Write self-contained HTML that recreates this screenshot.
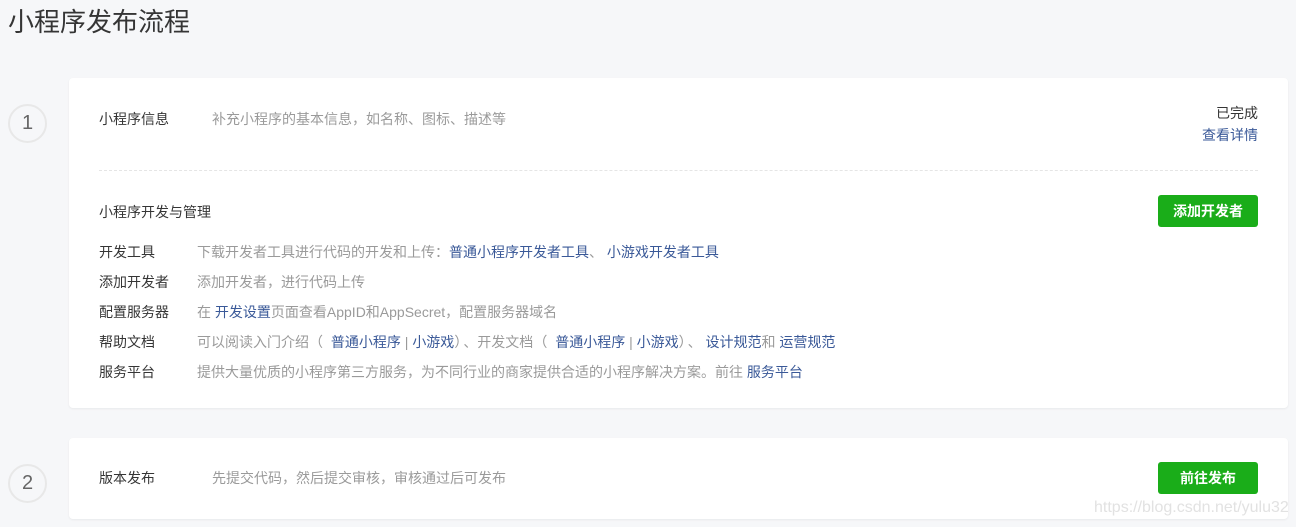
<!DOCTYPE html>
<html><head><meta charset="utf-8"><style>
*{margin:0;padding:0;box-sizing:border-box}
body{width:1296px;height:527px;background:#f6f7f9;font-family:"Liberation Sans","Noto Sans CJK SC",sans-serif;position:relative;overflow:hidden;font-size:14px;color:#353535}
.a{position:absolute;white-space:nowrap;line-height:18px}
.title{left:8px;top:6px;font-size:26px;line-height:32px;color:#353535}
.card{position:absolute;left:69px;width:1219px;background:#fff;border-radius:4px;box-shadow:0 1px 2px rgba(0,0,0,.06)}
.circ{position:absolute;left:8px;width:39px;height:39px;border:2px solid #e8e8e8;border-radius:50%;text-align:center;line-height:35px;font-size:20px;color:#666;background:#f6f7f9;font-weight:300}
.g{color:#9a9a9a}
.l{color:#3a5998}
.p{letter-spacing:2px}
.btn{position:absolute;background:#1aad19;color:#fff;border-radius:3px;text-align:center;font-size:14px;font-weight:bold}
</style></head><body>
<div class="a title">小程序发布流程</div>
<div class="circ" style="top:104px">1</div>
<div class="circ" style="top:464px">2</div>
<div class="card" style="top:78px;height:330px"></div>
<div class="card" style="top:438px;height:81px"></div>
<div class="a" style="left:99px;top:110px">小程序信息</div>
<div class="a g" style="left:212px;top:110px">补充小程序的基本信息，如名称、图标、描述等</div>
<div class="a" style="left:1216px;top:104px">已完成</div>
<div class="a l" style="left:1202px;top:126px">查看详情</div>
<div style="position:absolute;left:99px;top:170px;width:1159px;border-top:1px dashed #e5e5e5"></div>
<div class="a" style="left:99px;top:203px">小程序开发与管理</div>
<div class="btn" style="left:1158px;top:195px;width:100px;height:32px;line-height:32px">添加开发者</div>
<div class="a" style="left:99px;top:243px">开发工具</div>
<div class="a g" style="left:197px;top:243px">下载开发者工具进行代码的开发和上传：<span class="l">普通小程序开发者工具</span>、 <span class="l">小游戏开发者工具</span></div>
<div class="a" style="left:99px;top:273px">添加开发者</div>
<div class="a g" style="left:197px;top:273px">添加开发者，进行代码上传</div>
<div class="a" style="left:99px;top:303px">配置服务器</div>
<div class="a g" style="left:197px;top:303px">在 <span class="l">开发设置</span>页面查看AppID和AppSecret，配置服务器域名</div>
<div class="a" style="left:99px;top:333px">帮助文档</div>
<div class="a g" style="left:197px;top:333px">可以阅读入门介绍<span class="p">（ </span><span class="l">普通小程序</span> | <span class="l">小游戏</span><span class="p">）</span>、开发文档<span class="p">（ </span><span class="l">普通小程序</span> | <span class="l">小游戏</span><span class="p">）</span>、 <span class="l">设计规范</span>和 <span class="l">运营规范</span></div>
<div class="a" style="left:99px;top:363px">服务平台</div>
<div class="a g" style="left:197px;top:363px">提供大量优质的小程序第三方服务，为不同行业的商家提供合适的小程序解决方案。前往 <span class="l">服务平台</span></div>
<div class="a" style="left:99px;top:469px">版本发布</div>
<div class="a g" style="left:212px;top:469px">先提交代码，然后提交审核，审核通过后可发布</div>
<div class="btn" style="left:1158px;top:462px;width:100px;height:32px;line-height:32px">前往发布</div>
<div class="a" style="left:1094px;top:499px;font-size:16px;color:#e2e2e2">https://blog.csdn.net/yulu32</div>
</body></html>
